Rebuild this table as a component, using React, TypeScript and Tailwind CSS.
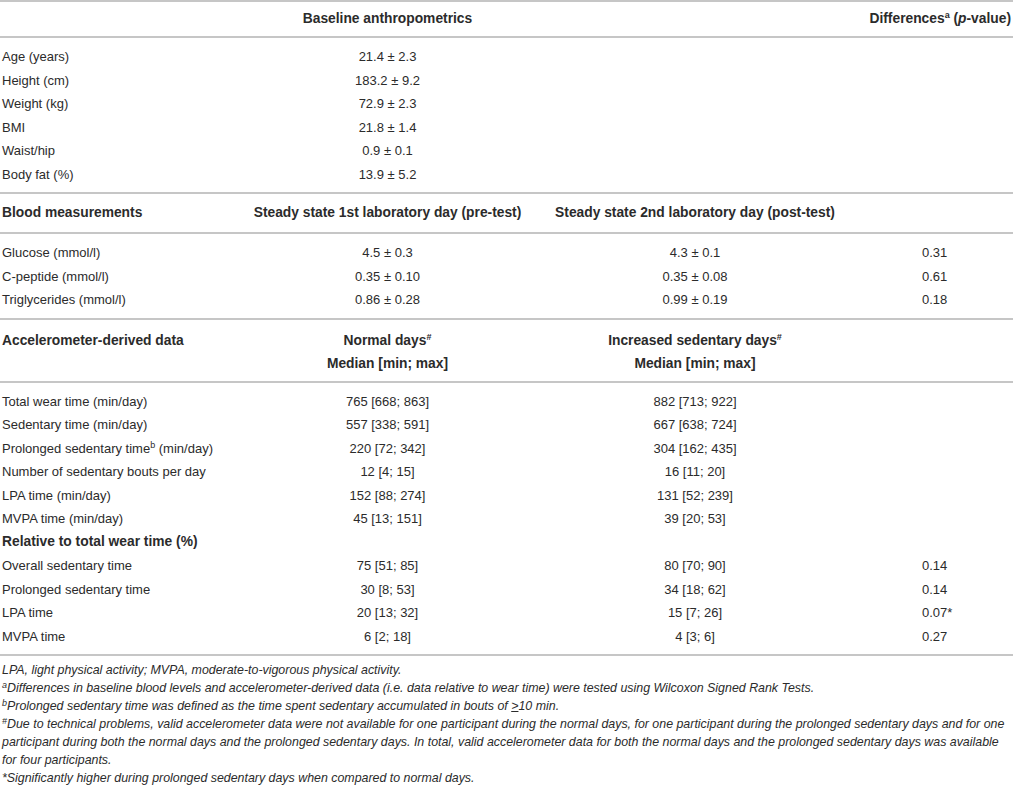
const font = { fontFamily: '"Liberation Sans", Arial, Helvetica, sans-serif' };

type Row = [string, string, string, string];

const anthro: Row[] = [
  ["Age (years)", "21.4 ± 2.3", "", ""],
  ["Height (cm)", "183.2 ± 9.2", "", ""],
  ["Weight (kg)", "72.9 ± 2.3", "", ""],
  ["BMI", "21.8 ± 1.4", "", ""],
  ["Waist/hip", "0.9 ± 0.1", "", ""],
  ["Body fat (%)", "13.9 ± 5.2", "", ""],
];

const blood: Row[] = [
  ["Glucose (mmol/l)", "4.5 ± 0.3", "4.3 ± 0.1", "0.31"],
  ["C-peptide (mmol/l)", "0.35 ± 0.10", "0.35 ± 0.08", "0.61"],
  ["Triglycerides (mmol/l)", "0.86 ± 0.28", "0.99 ± 0.19", "0.18"],
];

const accel: Row[] = [
  ["Total wear time (min/day)", "765 [668; 863]", "882 [713; 922]", ""],
  ["Sedentary time (min/day)", "557 [338; 591]", "667 [638; 724]", ""],
  ["Prolonged sedentary time^b (min/day)", "220 [72; 342]", "304 [162; 435]", ""],
  ["Number of sedentary bouts per day", "12 [4; 15]", "16 [11; 20]", ""],
  ["LPA time (min/day)", "152 [88; 274]", "131 [52; 239]", ""],
  ["MVPA time (min/day)", "45 [13; 151]", "39 [20; 53]", ""],
  ["#Relative to total wear time (%)", "", "", ""],
  ["Overall sedentary time", "75 [51; 85]", "80 [70; 90]", "0.14"],
  ["Prolonged sedentary time", "30 [8; 53]", "34 [18; 62]", "0.14"],
  ["LPA time", "20 [13; 32]", "15 [7; 26]", "0.07*"],
  ["MVPA time", "6 [2; 18]", "4 [3; 6]", "0.27"],
];

const grid = "grid grid-cols-[250px_275px_340px_1fr]";

function Label({ text }: { text: string }) {
  // "#" marks a bold sub-heading row, "^b" a footnote mark
  if (text.startsWith("#")) {
    return <span className="font-bold text-[13.8px]">{text.slice(1)}</span>;
  }
  if (text.includes("^b")) {
    const [a, b] = text.split("^b");
    return (
      <span>
        {a}
        <sup className="text-[9px]">b</sup>
        {b}
      </span>
    );
  }
  return <span>{text}</span>;
}

function Body({ rows }: { rows: Row[] }) {
  return (
    <div className="border-b-2 border-[#c6c6c6] pt-[7px] pb-[6px]">
      {rows.map((r) => (
        <div key={r[0]} className={`${grid} h-[23.5px] items-center`}>
          <div className="pl-[2px] whitespace-nowrap">
            <Label text={r[0]} />
          </div>
          <div className="text-center">{r[1]}</div>
          <div className="text-center">{r[2]}</div>
          <div className="pl-[57px]">{r[3]}</div>
        </div>
      ))}
    </div>
  );
}

export default function App() {
  return (
    <div
      className="w-[1013px] h-[785px] overflow-hidden bg-white text-[13px] text-[#2b2b2b]"
      style={font}
    >
      {/* header */}
      <div className={`${grid} h-[38px] items-center border-y-2 border-[#c6c6c6] font-bold text-[13.8px]`}>
        <div />
        <div className="text-center">Baseline anthropometrics</div>
        <div />
        <div className="text-right pr-[2px] whitespace-nowrap">
          Differences<sup className="text-[9px]">a</sup> (<i>p</i>-value)
        </div>
      </div>
      <Body rows={anthro} />

      <div className={`${grid} h-[40px] items-center border-b-2 border-[#c6c6c6] font-bold text-[13.8px]`}>
        <div className="pl-[2px]">Blood measurements</div>
        <div className="text-center whitespace-nowrap">
          Steady state 1st laboratory day (pre-test)
        </div>
        <div className="text-center whitespace-nowrap">
          Steady state 2nd laboratory day (post-test)
        </div>
        <div />
      </div>
      <Body rows={blood} />

      <div className={`${grid} h-[63px] content-start pt-[10px] border-b-2 border-[#c6c6c6] font-bold text-[13.8px]`}>
        <div className="pl-[2px] h-[23px] flex items-center">Accelerometer-derived data</div>
        <div className="h-[23px] flex items-center justify-center">
          Normal days<sup className="text-[9px]">#</sup>
        </div>
        <div className="h-[23px] flex items-center justify-center">
          Increased sedentary days<sup className="text-[9px]">#</sup>
        </div>
        <div />
        <div />
        <div className="h-[23px] flex items-center justify-center">Median [min; max]</div>
        <div className="h-[23px] flex items-center justify-center">Median [min; max]</div>
        <div />
      </div>
      <Body rows={accel} />

      <div className="pt-[5px] pl-[2px] text-[12.4px] italic leading-[18px] whitespace-nowrap">
        <p>LPA, light physical activity; MVPA, moderate-to-vigorous physical activity.</p>
        <p>
          <sup className="text-[9px]">a</sup>Differences in baseline blood levels and
          accelerometer-derived data (i.e. data relative to wear time) were tested using
          Wilcoxon Signed Rank Tests.
        </p>
        <p>
          <sup className="text-[9px]">b</sup>Prolonged sedentary time was defined as the time
          spent sedentary accumulated in bouts of <span className="underline">&gt;</span>10 min.
        </p>
        <p>
          <sup className="text-[9px]">#</sup>Due to technical problems, valid accelerometer data
          were not available for one participant during the normal days, for one participant
          during the prolonged sedentary days and for one
        </p>
        <p>
          participant during both the normal days and the prolonged sedentary days. In total,
          valid accelerometer data for both the normal days and the prolonged sedentary days was
          available
        </p>
        <p>for four participants.</p>
        <p>*Significantly higher during prolonged sedentary days when compared to normal days.</p>
      </div>
    </div>
  );
}
